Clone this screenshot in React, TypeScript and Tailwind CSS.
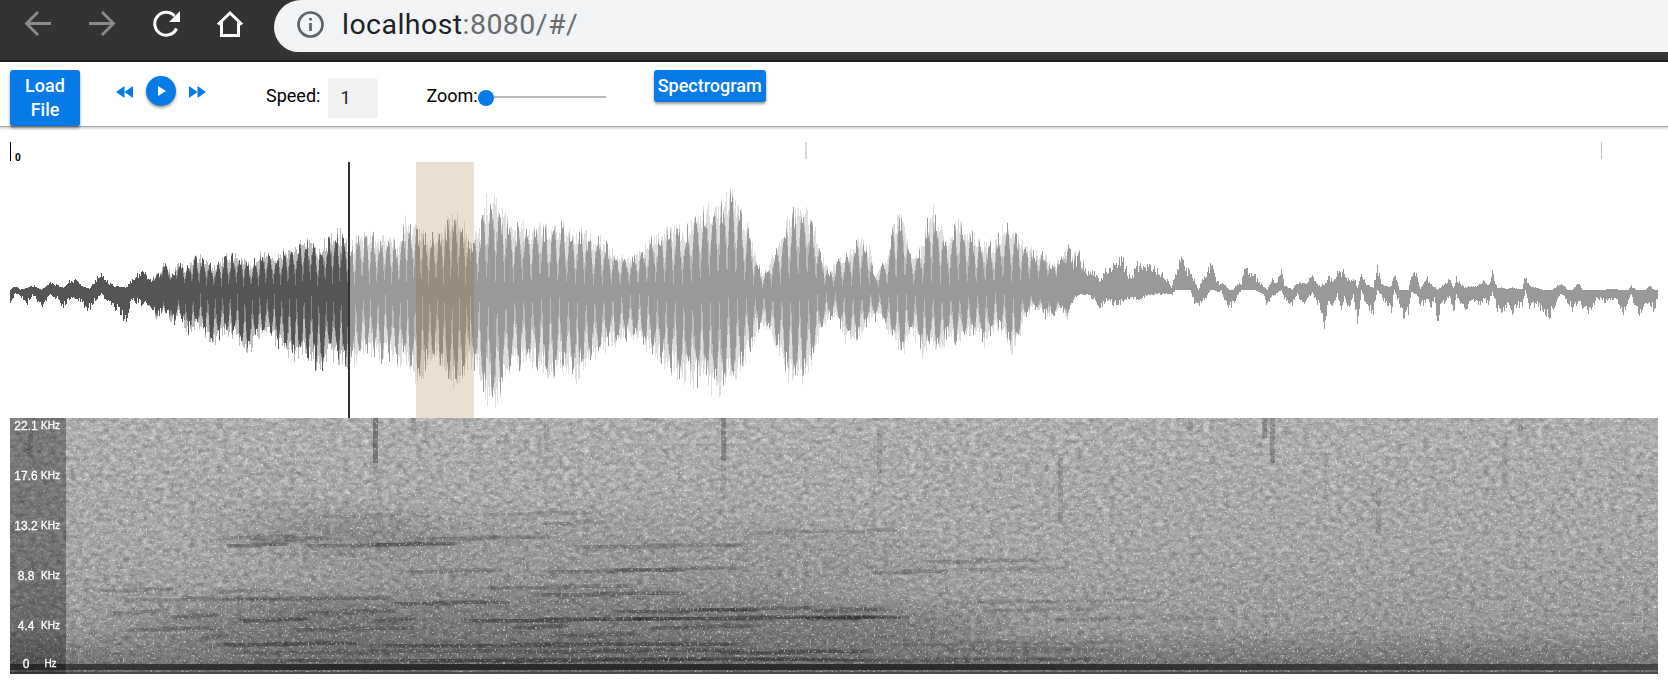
import React from "react";

// x, height above the axis, depth below the axis
const ENVELOPE =
  "10 0 13,15 4 3,20 0 6,27 2 14,32 5 5,41 0 17,49 7 5,57 5 8,63 2 17,69 9 10,76 10 8,82 4 14,89 1 20,95 9 10,101 21 3,106 10 10,112 5 18,120 3 25,126 3 32,131 9 10,141 22 14,150 12 18,157 15 30,163 26 20,172 18 37,178 28 25,186 22 46,197 36 35,206 30 50,212 24 57,220 30 48,226 35 45,236 39 53,243 30 55,250 25 66,257 35 50,265 42 45,275 35 55,286 40 65,295 45 72,302 50 65,310 50 75,318 40 82,326 52 75,336 60 70,342 58 82,350 45 80,358 55 70,368 60 65,378 52 75,388 55 70,396 48 80,401 48 75,404 75 70,413 65 90,420 60 93,428 55 75,435 60 65,445 65 92,453 80 103,461 75 95,470 50 75,478 60 90,486 92 115,495 92 118,503 80 100,512 60 80,522 70 78,532 60 78,540 66 85,552 62 90,560 70 78,568 62 85,576 60 92,585 60 82,592 50 75,600 55 68,608 45 60,616 35 55,626 35 50,636 35 50,645 45 62,655 55 70,665 60 80,675 65 85,685 62 95,695 70 97,702 85 92,710 86 105,720 85 108,730 100 92,738 85 90,746 70 70,752 50 55,757 30 45,763 15 38,770 30 42,777 45 60,787 70 88,796 88 100,805 85 90,815 62 72,822 35 38,829 18 30,836 28 28,844 35 52,853 48 56,861 55 45,870 40 30,874 15 32,881 28 30,886 32 40,895 75 57,903 72 65,910 40 45,918 40 55,922 45 70,930 90 60,939 65 62,948 50 50,957 70 60,965 65 45,975 55 45,985 48 57,995 50 38,1003 65 45,1012 65 65,1020 50 45,1025 45 28,1034 42 18,1045 40 28,1053 25 28,1060 32 18,1067 46 28,1072 35 12,1080 38 5,1087 18 5,1094 18 10,1100 10 18,1107 25 10,1114 25 15,1122 32 12,1130 12 8,1138 28 10,1147 28 5,1160 20 4,1167 10 4,1171 3 5,1175 20 0,1181 30 0,1190 18 0,1194 10 12,1198 0 16,1202 10 10,1205 14 9,1210 27 0,1214 17 0,1218 8 2,1221 8 0,1224 6 12,1229 0 19,1233 0 15,1237 6 5,1241 8 0,1245 26 0,1250 18 0,1255 14 0,1259 8 2,1263 4 5,1267 0 17,1272 12 7,1276 8 3,1281 22 0,1284 5 8,1292 0 17,1297 8 3,1301 8 14,1305 6 12,1312 14 2,1318 4 16,1324 6 35,1328 15 15,1333 10 14,1337 20 4,1341 18 20,1344 20 8,1349 10 22,1353 15 5,1357 2 35,1361 20 0,1366 6 20,1373 2 23,1377 27 0,1381 6 5,1385 4 15,1391 3 22,1394 18 0,1399 0 15,1404 0 28,1408 0 22,1411 14 2,1416 18 4,1420 1 17,1427 12 10,1430 6 22,1434 4 10,1437 0 30,1442 4 15,1449 12 8,1453 2 25,1456 14 5,1464 2 22,1472 4 12,1477 4 16,1483 10 10,1488 5 14,1492 18 2,1497 2 20,1502 2 25,1507 1 15,1512 2 24,1517 1 15,1522 1 18,1525 16 0,1529 4 17,1537 2 16,1542 0 22,1548 0 30,1552 0 22,1558 6 6,1563 5 5,1567 0 12,1572 0 20,1578 8 12,1582 0 18,1586 0 24,1592 0 18,1598 0 8,1604 0 12,1611 1 10,1618 0 12,1623 0 26,1628 0 10,1631 4 5,1636 0 20,1640 0 24,1645 0 20,1649 4 12,1654 0 22,1658 0 5"
    .split(",")
    .map((p) => p.split(" ").map(Number));

const random = (n: number) => {
  const v = Math.sin(n * 12.9898 + 4.137) * 43758.5453;
  return v - Math.floor(v);
};

function envelopeAt(x: number) {
  let i = 1;
  while (i < ENVELOPE.length - 1 && ENVELOPE[i][0] < x) i++;
  const a = ENVELOPE[i - 1];
  const b = ENVELOPE[i];
  const t = Math.min(1, Math.max(0, (x - a[0]) / (b[0] - a[0])));
  return [a[1] + (b[1] - a[1]) * t, a[2] + (b[2] - a[2]) * t];
}

function buildWave() {
  const light: string[] = [];
  const mid: string[] = [];
  const dark: string[] = [];
  const bar = (x: number, up: number, down: number) =>
    `M${x} ${(127.6 - up).toFixed(1)}h1V${(128.4 + down).toFixed(1)}h-1z`;
  for (let x = 0; x < 1648; x++) {
    const px = x + 10;
    const [up, down] = envelopeAt(px);
    const strength = Math.max(0, Math.min(1, (px - 140) / 60, (1100 - px) / 90));
    const period = px < 470 ? 7.4 : 8.9;
    const c1 = Math.sqrt(0.5 + 0.5 * Math.cos((x / period) * Math.PI * 2));
    const c2 = Math.sqrt(0.5 + 0.5 * Math.cos((x / period) * Math.PI * 2 - 1.1));
    const spread = 0.5 - 0.18 * strength;
    const ju = 1.12 - 0.07 * strength - spread * random(px);
    const jd = 1.12 - 0.09 * strength - spread * random(px + 5000);
    const carrier = (c: number, floor: number) => 1 - strength * (1 - floor) * (1 - c);
    light.push(bar(x, up * ju, down * jd));
    mid.push(bar(x, up * ju * carrier(c1, 0.45), down * jd * carrier(c2, 0.45)));
    dark.push(bar(x, up * ju * carrier(c1, 0.08), down * jd * carrier(c2, 0.08)));
  }
  return { light, mid, dark };
}

const wave = buildWave();
const PLAYED = 339;

// x, y, width, opacity of the harmonic streaks
const STREAKS =
  "205 118 85 .3,215 126 65 .45,290 126 160 .3,240 120 90 .25,360 125 90 .35,400 119 150 .3,560 127 190 .3,530 152 150 .35,600 150 140 .3,385 152 110 .25,520 175 160 .4,470 168 160 .25,90 171 80 .28,110 180 170 .25,205 172 60 .25,200 180 190 .3,380 184 120 .4,160 197 50 .4,100 193 60 .25,225 201 80 .4,360 201 50 .4,290 193 100 .25,450 201 200 .55,610 199 270 .55,600 192 150 .4,680 190 130 .35,790 199 110 .5,800 191 80 .4,110 210 100 .3,190 218 30 .3,280 210 130 .3,500 208 60 .4,640 208 110 .35,540 216 90 .3,205 225 150 .5,350 226 400 .45,210 233 300 .25,500 232 240 .35,700 233 170 .45,230 241 600 .35,390 241 500 .3,790 241 320 .3,930 230 150 .2,1040 200 100 .2,970 191 120 .2,910 142 130 .25,860 153 80 .3,940 150 120 .2,930 183 120 .15,830 112 60 .2,470 95 120 .2,540 104 60 .2,730 113 100 .2,1140 200 70 .18,1020 182 130 .15,850 225 260 .15,1000 232 120 .15,230 55 70 .12,240 86 60 .12,300 97 130 .12"
    .split(",")
    .map((p) => p.split(" ").map(Number));

// x, y, height, opacity of the vertical clicks
const CLICKS = [
  [363, 0, 45, 0.3], [363, 45, 22, 0.1], [401, 0, 16, 0.12], [711, 0, 42, 0.24], [711, 42, 40, 0.08],
  [534, 0, 40, 0.08], [867, 15, 40, 0.12], [1048, 40, 65, 0.11], [1252, 0, 20, 0.18], [1260, 0, 45, 0.18],
  [1366, 70, 45, 0.12], [1178, 0, 14, 0.12], [1508, 0, 20, 0.1], [1492, 20, 50, 0.07], [18, 10, 30, 0.15],
];

function SpectrogramImage() {
  return (
    <svg width="1648" height="256" viewBox="0 0 1648 256" className="block bg-[#a4a4a4]">
      <defs>
        <filter id="grain" x="0" y="0" width="100%" height="100%" colorInterpolationFilters="sRGB">
          <feTurbulence type="fractalNoise" baseFrequency="0.15 0.23" numOctaves="4" seed="8" />
          <feColorMatrix values="0.25 0.25 0 0 0.42  0.25 0.25 0 0 0.42  0.25 0.25 0 0 0.42  0 0 0 0 1" />
        </filter>
        <filter id="specks" x="0" y="0" width="100%" height="100%" colorInterpolationFilters="sRGB">
          <feTurbulence type="fractalNoise" baseFrequency="0.47 0.43" numOctaves="2" seed="21" />
          <feColorMatrix values="0 0 0 0 1  0 0 0 0 1  0 0 0 0 1  0 5.5 0 0 -3.3" />
        </filter>
        <filter id="smear" x="-10%" y="-10%" width="120%" height="120%">
          <feGaussianBlur stdDeviation="40 12" />
        </filter>
        <linearGradient id="low" x1="0" y1="0" x2="0" y2="1">
          <stop offset="0" stopColor="#000" stopOpacity="0" />
          <stop offset="0.5" stopColor="#000" stopOpacity="0.05" />
          <stop offset="0.82" stopColor="#000" stopOpacity="0.14" />
          <stop offset="1" stopColor="#000" stopOpacity="0.4" />
        </linearGradient>
        <linearGradient id="streak">
          <stop offset="0" stopOpacity="0" />
          <stop offset="0.12" stopOpacity="1" />
          <stop offset="0.85" stopOpacity="1" />
          <stop offset="1" stopOpacity="0" />
        </linearGradient>
        <linearGradient id="hum">
          <stop offset="0" stopColor="#303030" stopOpacity="0.8" />
          <stop offset="0.2" stopColor="#242424" stopOpacity="0.95" />
          <stop offset="0.6" stopColor="#242424" stopOpacity="0.9" />
          <stop offset="1" stopColor="#333" stopOpacity="0.7" />
        </linearGradient>
      </defs>
      <rect width="1648" height="256" filter="url(#grain)" />
      <rect width="1648" height="256" fill="url(#low)" />
      <g filter="url(#smear)">
        <ellipse cx="330" cy="112" rx="100" ry="18" opacity="0.16" />
        <ellipse cx="560" cy="208" rx="420" ry="32" opacity="0.19" />
        <ellipse cx="310" cy="190" rx="60" ry="18" opacity="0.1" />
        <ellipse cx="600" cy="140" rx="320" ry="40" opacity="0.07" />
      </g>
      {CLICKS.map(([x, y, h, o], i) => (
        <rect key={i} x={x} y={y} width="5" height={h} opacity={o} />
      ))}
      <g fill="url(#streak)">
        {STREAKS.map(([x, y, w, o], i) => (
          <g key={i} opacity={o * 0.62}>
            <rect x={x} y={y} width={w * 0.6} height="3.500" />
            <rect x={x + w * 0.35} y={y - 1.5} width={w * 0.65} height="3.500" />
          </g>
        ))}
      </g>
      <rect width="1648" height="256" filter="url(#specks)" opacity="0.5" />
      <rect y="246" width="1648" height="6" fill="url(#hum)" />
      <rect y="254" width="1648" height="2" fill="#444" opacity="0.85" />
    </svg>
  );
}

const LABELS = [
  ["22.1", "KHz"],
  ["17.6", "KHz"],
  ["13.2", "KHz"],
  ["8.8", "KHz"],
  ["4.4", "KHz"],
  ["0", "Hz"],
];

function FrequencyAxis() {
  return (
    <div className="absolute left-0 top-0 flex h-[256px] w-[56px] flex-col gap-[36px] bg-black/30 pt-px text-white [font-family:Arial,Helvetica,sans-serif]">
      {LABELS.map(([value, unit]) => (
        <div
          key={value}
          className="flex h-[14px] shrink-0 items-center pl-[3px] [-webkit-text-stroke:0.3px_white] last:-mt-[12px]"
        >
          <span className="w-[26px] text-center text-[12px] leading-[14px]">{value}</span>
          <span className="w-[23px] text-center text-[10px] leading-[14px]">{unit}</span>
        </div>
      ))}
    </div>
  );
}

export default function App() {
  return (
    <div className="flex h-[680px] w-[1668px] flex-col overflow-hidden bg-white text-black [font-family:Roboto,sans-serif]">
      <header className="flex h-[62px] shrink-0 items-start border-b-2 border-[#1f1e20] bg-[#333]">
        <svg width="274" height="52" viewBox="0 0 274 52" fill="none" className="shrink-0">
          <path d="M51 23.500H27M38 12L26.500 23.500L38 35" stroke="#8b8b8b" strokeWidth="2.8" />
          <path d="M89 23.500H113M102 12L113.500 23.500L102 35" stroke="#8b8b8b" strokeWidth="2.8" />
          <path d="M176.500 28.500A11.400 11.400 0 1 1 174.500 16" stroke="#fff" strokeWidth="3" />
          <path d="M180 11V22H169Z" fill="#fff" />
          <path d="M218 24.500L230 13L242 24.500M221.500 22V35.500H238.500V22" stroke="#fff" strokeWidth="3" />
        </svg>
        <div className="flex h-[52px] grow items-center rounded-bl-[26px] rounded-tl-[29px] bg-[#f1f3f5] pb-[4px] pl-[23px]">
          <svg width="27" height="27" viewBox="0 0 27 27" fill="none">
            <circle cx="13.500" cy="13.500" r="12" stroke="#5f6368" strokeWidth="2.7" />
            <path d="M13.500 12V20M13.500 7V9.600" stroke="#5f6368" strokeWidth="2.7" />
          </svg>
          <span className="ml-[18px] pt-[2px] text-[28.5px] leading-[32px] tracking-[0.45px] text-[#202124]">
            localhost<span className="text-[#696b6e]">:8080/#/</span>
          </span>
        </div>
      </header>

      <section className="flex h-[65px] shrink-0 items-start border-b border-[#a8a8a8] pl-[10px] shadow-[0_1px_3px_rgba(0,0,0,0.25)]">
        <button className="mt-[8px] h-[56px] w-[70px] rounded-[3px] bg-[#067ae6] text-[18px] font-medium leading-[24px] text-white shadow-[0_2px_3px_rgba(0,0,0,0.4)]">
          Load
          <br />
          File
        </button>
        <div className="ml-[35px] mt-[14px] flex h-[30px] items-center">
          <svg width="20" height="14" viewBox="0 0 20 14" fill="#067ae6" className="mt-[2px]">
            <path d="M9.500 1V13L1 7ZM18 1V13L9.500 7Z" />
          </svg>
          <button className="ml-[11px] flex size-[30px] items-center justify-center rounded-full bg-[#067ae6] shadow-[0_2px_3px_rgba(0,0,0,0.4)]">
            <svg width="30" height="30" viewBox="0 0 30 30" fill="#fff">
              <path d="M12 10V20L20 15Z" />
            </svg>
          </button>
          <svg width="20" height="14" viewBox="0 0 20 14" fill="#067ae6" className="ml-[12px] mt-[2px]">
            <path d="M1 1V13L9.500 7ZM9.500 1V13L18 7Z" />
          </svg>
        </div>
        <label className="ml-[58px] mt-[16px] flex h-[40px] items-center text-[18px]">
          <span className="pb-[5px]">Speed:</span>
          <span className="ml-[8px] h-[40px] w-[50px] rounded-t-[3px] bg-[#f1f1f1] pl-[12px] text-[18px] leading-[40px] text-[#222]">
            1
          </span>
        </label>
        <label className="ml-[48px] mt-[16px] flex h-[40px] items-center text-[18px]">
          <span className="pb-[5px]">Zoom:</span>
          <span className="flex items-center pb-[1px]">
            <span className="size-[16px] rounded-full bg-[#067ae6]" />
            <span className="mb-[2px] h-[2px] w-[112px] bg-[#b9b9b9]" />
          </span>
        </label>
        <button className="ml-[48px] mt-[8px] h-[32px] w-[112px] rounded-[3px] bg-[#067ae6] text-[18px] font-medium leading-[32px] text-white shadow-[0_2px_3px_rgba(0,0,0,0.4)]">
          Spectrogram
        </button>
      </section>

      <main className="flex flex-col pl-[10px] pt-[15px]">
        <div className="relative flex h-[20px] w-[1648px]">
          <div className="h-[19px] w-[1px] bg-black" />
          <span className="pl-[4px] pt-[10px] text-[10px] font-bold leading-[12px]">0</span>
          <div className="absolute left-[795px] top-0 h-[17px] w-[2px] bg-[#d8d8d8]" />
          <div className="absolute left-[1591px] top-0 h-[17px] w-[1px] bg-[#c0c0c0]" />
        </div>
        <div className="relative h-[256px] w-[1648px]">
          <svg width="1648" height="256" viewBox="0 0 1648 256" className="block">
            <g shapeRendering="crispEdges">
              <path d={wave.light.slice(0, PLAYED).join("")} fill="#bdbdbd" />
              <path d={wave.mid.slice(0, PLAYED).join("")} fill="#858585" />
              <path d={wave.dark.slice(0, PLAYED).join("")} fill="#555" />
              <path d={wave.light.slice(PLAYED).join("")} fill="#dedede" />
              <path d={wave.mid.slice(PLAYED).join("")} fill="#bcbcbc" />
              <path d={wave.dark.slice(PLAYED).join("")} fill="#999" />
            </g>
          </svg>
          <div className="absolute left-[338px] top-0 h-[256px] w-[2px] bg-[#333]" />
          <div className="absolute left-[406px] top-0 h-[256px] w-[58px] bg-[rgba(139,92,8,0.19)]" />
        </div>
        <div className="relative h-[256px] w-[1648px]">
          <SpectrogramImage />
          <FrequencyAxis />
        </div>
      </main>
    </div>
  );
}
